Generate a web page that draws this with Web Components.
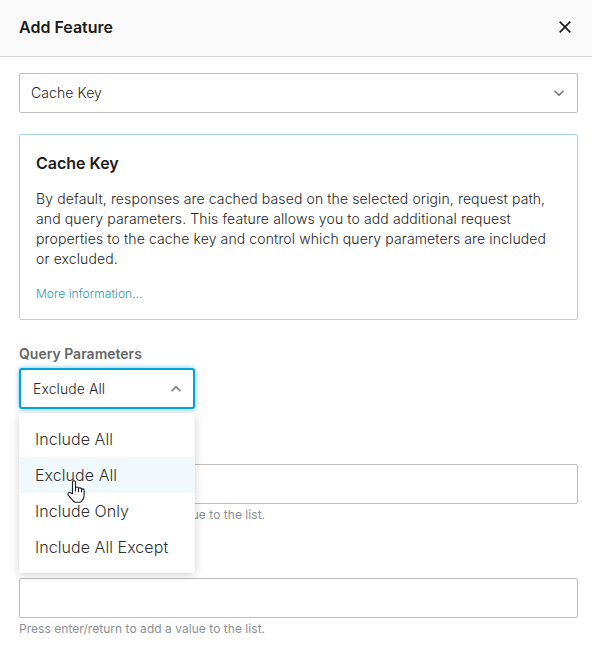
<!DOCTYPE html>
<html lang="en">
<head>
<meta charset="utf-8">
<title>Add Feature</title>
<style>
html,body{margin:0;background:#fff;height:645px;overflow:hidden}
body{font-family:Inter,"Liberation Sans",sans-serif;color:#262626}
</style>
</head>
<body>
<feature-dialog>
  <dialog-header slot="header">Add Feature</dialog-header>
  <select-box>Cache Key</select-box>
  <info-card>
    <span slot="title">Cache Key</span>
    By default, responses are cached based on the selected origin, request path,<br>and query parameters. This feature allows you to add additional request<br>properties to the cache key and control which query parameters are included<br>or excluded.
    <span slot="link">More information...</span>
  </info-card>
  <param-field>
    <span slot="label">Query Parameters</span>
    <select-box open>Exclude All</select-box>
    <option-menu slot="menu">
      <option-item>Include All</option-item>
      <option-item active>Exclude All</option-item>
      <option-item>Include Only</option-item>
      <option-item>Include All Except</option-item>
    </option-menu>
  </param-field>
  <tag-input class="first">Press enter/return to add a value to the list.</tag-input>
  <tag-input>Press enter/return to add a value to the list.</tag-input>
</feature-dialog>
<script>
const define = (name, html) => {
  const template = document.createElement('template');
  template.innerHTML = html;
  customElements.define(name, class extends HTMLElement {
    constructor() {
      super();
      this.attachShadow({mode: 'open'}).append(template.content.cloneNode(true));
    }
  });
};

define('feature-dialog', `
<style>
:host{display:block;width:592px;height:645px;overflow:hidden}
main{display:flex;flex-direction:column;padding:16px 14px 0 19px}
::slotted(info-card){margin-top:21px}
::slotted(param-field){margin-top:24px}
::slotted(tag-input){margin-top:53px}
::slotted(tag-input.first){margin-top:55px}
</style>
<slot name="header"></slot><main><slot></slot></main>`);

define('dialog-header', `
<style>
:host{display:flex;box-sizing:border-box;height:57px;padding:0 20px 2px 19px;align-items:center;justify-content:space-between;background:#fafafa;border-bottom:1px solid #d9d9d9;color:#1b1b1b;font-size:16px;font-weight:600;line-height:24px}
svg{display:block}
</style>
<span><slot></slot></span>
<svg width="14" height="14" viewBox="0 0 14 14" fill="none" stroke="#1b1b1b" stroke-width="1.7"><path d="M1.7 1.7 12.3 12.3M12.3 1.7 1.7 12.3"/></svg>`);

define('select-box', `
<style>
:host{display:flex;box-sizing:border-box;width:559px;height:40px;padding:0 13px 0 11px;align-items:center;justify-content:space-between;border:1px solid #bdbdbd;border-radius:2px;background:#fff;font-size:14px;font-weight:350;line-height:20px;letter-spacing:.09px}
:host([open]){width:176px;height:41px;padding:0 12px;border:2px solid #00a3e0;border-radius:3px;box-shadow:0 0 5px rgba(0,163,224,.6)}
:host([open]) svg{transform:rotate(180deg)}
svg{display:block}
</style>
<span><slot></slot></span>
<svg width="10" height="8" viewBox="0 0 10 8" fill="none" stroke="#777" stroke-width="1.5"><path d="M.5 1.700 5 6.100 9.500 1.700"/></svg>`);

define('info-card', `
<style>
:host{display:block;box-sizing:border-box;width:559px;height:186px;padding:16px 16px 0;border:1px solid #a6d5f5;border-radius:2px}
h2{margin:0;font-size:16px;font-weight:600;line-height:24px;color:#1b1b1b}
p{margin:14px 0 0;font-size:14px;font-weight:350;line-height:20px;letter-spacing:.12px;white-space:nowrap}
a{display:block;margin-top:16px;font-size:12px;font-weight:350;line-height:18px;color:#2b9aa8;letter-spacing:.06px}
</style>
<h2><slot name="title"></slot></h2><p><slot></slot></p><a><slot name="link"></slot></a>`);

define('param-field', `
<style>
:host{display:block;position:relative;height:65px}
label{display:block;height:24px;font-size:14px;font-weight:600;line-height:20px;color:#666}
::slotted(option-menu){position:absolute;left:0;top:69px;z-index:2}
.pointer{position:absolute;left:48px;top:135px;z-index:3}
</style>
<label><slot name="label"></slot></label><slot></slot><slot name="menu"></slot>
<svg class="pointer" width="20" height="26" viewBox="0 0 20 26" fill="#fff" stroke="#171c2c" stroke-width="1.1" stroke-linejoin="round"><path d="M5.5 15V3.2c0-2 3-2 3 0v6c0-1.7 3-1.7 3 0v.7c0-1.5 3-1.4 3 .2v.7c0-1.3 2.6-1.2 2.6.4v5.3c0 1.5-.5 2.5-1 3.5-.8 1.7-1.6 3.3-3.1 3.3H8.5c-1.2 0-2-.8-2.6-1.7L1.4 16.4c-1.2-2 .6-3.6 2.3-2.600L5.500 15M8.500 9.200v3.300M11.500 9.900v3M14.500 10.800v2.500"/></svg>`);

define('option-menu', `
<style>
:host{display:flex;flex-direction:column;box-sizing:border-box;width:176px;height:160px;padding:8px 0;border-radius:3px;background:#fff;box-shadow:0 2px 10px rgba(0,0,0,.18)}
</style><slot></slot>`);

define('option-item', `
<style>
:host{display:block;box-sizing:border-box;height:36px;padding-left:16px;font-size:16px;font-weight:300;line-height:36px;color:#303030;white-space:nowrap;letter-spacing:.06px}
:host([active]){background:#f1f9fd}
</style><slot></slot>`);

define('tag-input', `
<style>
:host{display:block;height:61px}
input{display:block;box-sizing:border-box;width:559px;height:40px;margin:0;padding:0 11px;border:1px solid #bdbdbd;border-radius:2px;background:#fff;font:inherit}
small{display:block;margin-top:2px;font-size:12px;line-height:18px;color:#8a8f96;letter-spacing:.04px}
</style><input type="text"><small><slot></slot></small>`);
</script>
</body>
</html>
